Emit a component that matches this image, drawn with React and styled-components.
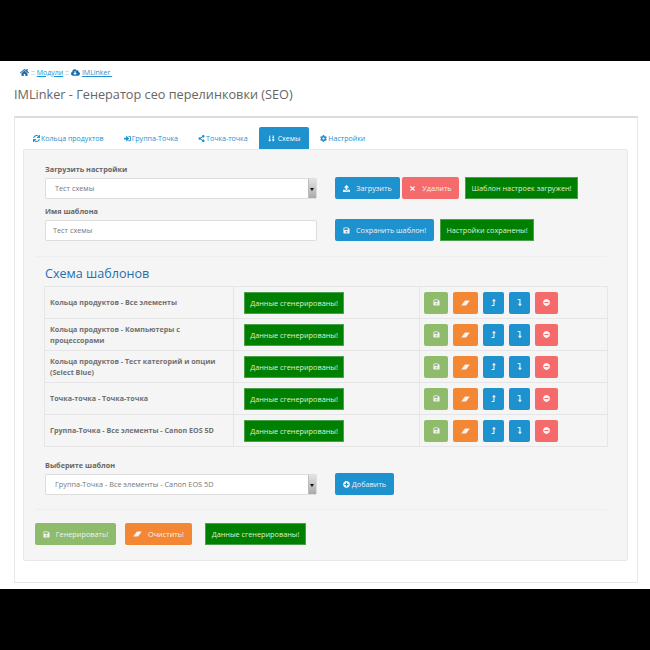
import React from 'react';
import styled, { createGlobalStyle } from 'styled-components';
import {
  FaHome, FaCloudDownloadAlt, FaSync, FaSignInAlt, FaShareAlt, FaSortNumericDown, FaCog,
  FaUpload, FaTimes, FaSave, FaLevelUpAlt, FaLevelDownAlt, FaMinusCircle, FaPlusCircle,
} from 'react-icons/fa';

const GlobalStyle = createGlobalStyle`
  html, body { margin: 0; padding: 0; background: #000; }
  body { font-family: "Open Sans", "Liberation Sans", sans-serif; }
  * { box-sizing: border-box; }
`;

const Page = styled.div`
  width: 650px;
  height: 528px;
  margin-top: 61px;
  background: #fff;
  padding: 0 12px 0 14px;
  overflow: hidden;
`;

const Crumbs = styled.div`
  display: flex;
  align-items: center;
  height: 12px;
  margin: 5px 0 0 6px;
  font-size: 7px;
  color: #999;
  gap: 2px;
  svg { color: #1e6fa8; width: 9px; height: 9px; }
  a { color: #1e91cf; text-decoration: underline; }
`;

const Title = styled.h1`
  margin: 7px 0 0;
  font-size: 12.7px;
  line-height: 18px;
  font-weight: 400;
  color: #666;
`;

const Panel = styled.div`
  margin-top: 13px;
  height: 467px;
  border: 1px solid #e8e8e8;
  border-top: 2px solid #dcdcdc;
  padding: 9px 9px 0 8px;
`;

const Tabs = styled.div`
  display: flex;
  height: 22px;
`;

const Tab = styled.div`
  display: flex;
  align-items: center;
  gap: ${p => p.$gap ?? 1}px;
  height: 22px;
  padding: 0 ${p => p.$pad}px;
  margin-left: ${p => p.$ml ?? 0}px;
  font-size: 7.05px;
  border-radius: 2px 2px 0 0;
  color: ${p => (p.$active ? '#fff' : '#1e91cf')};
  background: ${p => (p.$active ? '#1e91cf' : 'transparent')};
  svg { width: 7px; height: 7px; }
`;

const Well = styled.div`
  height: 412px;
  background: #f5f5f5;
  border: 1px solid #e8e8e8;
  border-radius: 2px;
  padding: 14px 20px 0 11px;
`;

const Section = styled.div`
  padding-left: 10px;
`;

const Label = styled.div`
  font-size: 7.3px;
  line-height: 11px;
  font-weight: 700;
  color: #666;
  margin-top: ${p => p.$mt ?? 0}px;
  margin-bottom: 2px;
`;

const FormRow = styled.div`
  display: flex;
  align-items: center;
  margin-bottom: ${p => p.$mb ?? 7}px;
`;

const FakeSelect = styled.div`
  position: relative;
  display: flex;
  align-items: center;
  width: 272px;
  height: 21px;
  margin-right: 18px;
  padding-left: 9px;
  font-size: 7.3px;
  color: #777;
  background: #fff;
  border: 1px solid #ddd;
  border-radius: 2px;
`;

const SelectArrow = styled.span`
  position: absolute;
  top: 0;
  right: 0;
  width: 8px;
  height: 100%;
  background: linear-gradient(#e4e4e4, #a9a9a9);
  border-left: 1px solid #bbb;
  &::after {
    content: '';
    position: absolute;
    top: 9px;
    left: 1px;
    border: 2px solid transparent;
    border-top: 3px solid #111;
    border-bottom: 0;
  }
`;

const TextInput = styled.div`
  display: flex;
  align-items: center;
  width: 272px;
  height: 21px;
  margin-right: 18px;
  padding-left: 7px;
  font-size: 7.3px;
  color: #777;
  background: #fff;
  border: 1px solid #ddd;
  border-radius: 2px;
`;

const colors = {
  blue: '#1e91cf',
  red: '#f56b6b',
  green: '#8fbb6c',
  orange: '#f38733',
};

const Button = styled.button`
  display: inline-flex;
  align-items: center;
  justify-content: center;
  gap: ${p => p.$gap ?? 6}px;
  width: ${p => p.$w}px;
  height: 22px;
  margin-left: ${p => p.$ml ?? 0}px;
  padding: 0;
  font: 400 7.3px "Open Sans", "Liberation Sans", sans-serif;
  color: #f2f2f2;
  background: ${p => colors[p.$kind]};
  border: 0;
  border-radius: 2px;
  flex: none;
  svg { width: 7px; height: 7px; }
`;

const Status = styled.div`
  display: flex;
  align-items: center;
  justify-content: center;
  width: ${p => p.$w}px;
  height: 22px;
  margin-left: ${p => p.$ml ?? 0}px;
  font-size: 7.3px;
  color: #dcefdc;
  background: #008000;
  border: 1px solid #4c9f4c;
  flex: none;
`;

const Divider = styled.hr`
  height: 1px;
  margin: ${p => p.$m};
  border: 0;
  background: #eee;
`;

const Heading = styled.h2`
  margin: 0 0 2px 10px;
  font-size: 12.6px;
  line-height: 21px;
  font-weight: 400;
  color: #1e6fb0;
`;

const Table = styled.div`
  display: grid;
  grid-template-columns: 188px 186px 189px;
  width: 564px;
  margin-left: 9px;
  border: 1px solid #e6e6e6;
  border-bottom: 0;
`;

const NameCell = styled.div`
  display: flex;
  align-items: center;
  height: 32px;
  padding: 0 5px;
  font-size: 7.15px;
  line-height: 11px;
  font-weight: 700;
  color: #707070;
  border-bottom: 1px solid #e6e6e6;
`;

const StatusCell = styled.div`
  display: flex;
  align-items: center;
  height: 32px;
  padding-left: 10px;
  border-left: 1px solid #e6e6e6;
  border-bottom: 1px solid #e6e6e6;
`;

const ActionCell = styled.div`
  display: flex;
  align-items: center;
  gap: 5px;
  height: 32px;
  padding-left: 4px;
  border-left: 1px solid #e6e6e6;
  border-bottom: 1px solid #e6e6e6;
`;

const Footer = styled.div`
  display: flex;
  align-items: center;
`;

const EraserSvg = styled.svg`
  && { width: 9px; height: 6px; }
`;

// FontAwesome 4 style eraser, the package only has the newer one
const EraserIcon = () => (
  <EraserSvg viewBox="0 0 20 14" fill="currentColor" aria-hidden="true">
    <path d="M0 13 L8 2 Q9 1 11 1 H20 L12 12 Q11 13 9 13 Z" />
  </EraserSvg>
);

const rows = [
  'Кольца продуктов - Все элементы',
  'Кольца продуктов - Компьютеры с процессорами',
  'Кольца продуктов - Тест категорий и опции (Select Blue)',
  'Точка-точка - Точка-точка',
  'Группа-Точка - Все элементы - Canon EOS 5D',
];

export default function App() {
  return (
    <>
      <GlobalStyle />
      <Page>
        <Crumbs>
          <FaHome /> :: <a>Модули</a> :: <FaCloudDownloadAlt /> <a>IMLinker&nbsp;</a>
        </Crumbs>
        <Title>IMLinker - Генератор сео перелинковки (SEO)</Title>
        <Panel>
          <Tabs>
            <Tab $pad={10}><FaSync />Кольца продуктов</Tab>
            <Tab $pad={10}><FaSignInAlt />Группа-Точка</Tab>
            <Tab $pad={10}><FaShareAlt />Точка-точка</Tab>
            <Tab $pad={9} $gap={3} $ml={1} $active><FaSortNumericDown />Схемы</Tab>
            <Tab $pad={10} $ml={1}><FaCog />Настройки</Tab>
          </Tabs>
          <Well>
            <Section>
              <Label>Загрузить настройки</Label>
              <FormRow>
                <FakeSelect>Тест схемы<SelectArrow /></FakeSelect>
                <Button $kind="blue" $w={65}><FaUpload />Загрузить</Button>
                <Button $kind="red" $w={57} $ml={2}><FaTimes />Удалить</Button>
                <Status $w={113} $ml={6}>Шаблон настроек загружен!</Status>
              </FormRow>
              <Label>Имя шаблона</Label>
              <FormRow $mb={15}>
                <TextInput>Тест схемы</TextInput>
                <Button $kind="blue" $w={99}><FaSave />Сохранить шаблон!</Button>
                <Status $w={94} $ml={6}>Настройки сохранены!</Status>
              </FormRow>
            </Section>
            <Divider $m="0 0 6px 0" />
            <Heading>Схема шаблонов</Heading>
            <Table>
              {rows.map(name => (
                <React.Fragment key={name}>
                  <NameCell>{name}</NameCell>
                  <StatusCell><Status $w={100}>Данные сгенерированы!</Status></StatusCell>
                  <ActionCell>
                    <Button $kind="green" $w={24}><FaSave /></Button>
                    <Button $kind="orange" $w={25}><EraserIcon /></Button>
                    <Button $kind="blue" $w={21}><FaLevelUpAlt /></Button>
                    <Button $kind="blue" $w={21}><FaLevelDownAlt /></Button>
                    <Button $kind="red" $w={23}><FaMinusCircle /></Button>
                  </ActionCell>
                </React.Fragment>
              ))}
            </Table>
            <Section>
              <Label $mt={13}>Выберите шаблон</Label>
              <FormRow $mb={14}>
                <FakeSelect>Группа-Точка - Все элементы - Canon EOS 5D<SelectArrow /></FakeSelect>
                <Button $kind="blue" $w={59} $gap={2}><FaPlusCircle />Добавить</Button>
              </FormRow>
            </Section>
            <Divider $m="0 0 13px 0" />
            <Footer>
              <Button $kind="green" $w={81}><FaSave />Генерировать!</Button>
              <Button $kind="orange" $w={67} $ml={9}><EraserIcon />Очистить!</Button>
              <Status $w={101} $ml={13}>Данные сгенерированы!</Status>
            </Footer>
          </Well>
        </Panel>
      </Page>
    </>
  );
}
